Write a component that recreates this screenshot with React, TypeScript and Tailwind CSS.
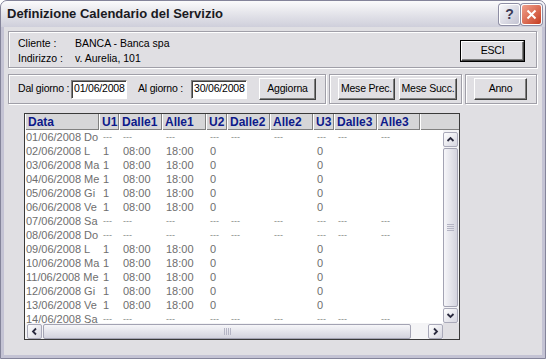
import React from 'react';

const cols = [74, 20, 43, 44, 21, 43, 43, 21, 43, 43];
const heads = ['Data', 'U1', 'Dalle1', 'Alle1', 'U2', 'Dalle2', 'Alle2', 'U3', 'Dalle3', 'Alle3'];

const days: [string, boolean][] = [
  ['01/06/2008 Do', false],
  ['02/06/2008 L', true],
  ['03/06/2008 Ma', true],
  ['04/06/2008 Me', true],
  ['05/06/2008 Gi', true],
  ['06/06/2008 Ve', true],
  ['07/06/2008 Sa', false],
  ['08/06/2008 Do', false],
  ['09/06/2008 L', true],
  ['10/06/2008 Ma', true],
  ['11/06/2008 Me', true],
  ['12/06/2008 Gi', true],
  ['13/06/2008 Ve', true],
  ['14/06/2008 Sa', false],
];

const btn =
  'flex items-center justify-center whitespace-nowrap bg-[#e0dfe3] border border-t-white border-l-white border-r-[#404040] border-b-[#404040] shadow-[inset_-1px_-1px_0_#808080] text-[10.5px] tracking-[-0.2px] text-black';

const group = 'border border-[#a09fa8] shadow-[1px_1px_0_#ffffff,inset_1px_1px_0_#ffffff]';

const input =
  'h-[19px] flex items-center whitespace-nowrap overflow-hidden bg-white pl-[2px] text-[10.5px] text-black border border-t-[#808080] border-l-[#808080] border-r-white border-b-white shadow-[inset_1px_1px_0_#404040]';

function Chevron({ dir }: { dir: 'up' | 'down' | 'left' | 'right' }) {
  const d = {
    up: 'M1.5 6 L4.5 3 L7.5 6',
    down: 'M1.5 3 L4.5 6 L7.5 3',
    left: 'M6 1.5 L3 4.5 L6 7.5',
    right: 'M3 1.5 L6 4.5 L3 7.5',
  }[dir];
  return (
    <svg width="9" height="9" viewBox="0 0 9 9">
      <path d={d} fill="none" stroke="#2b2b3f" strokeWidth={1.8} />
    </svg>
  );
}

function ScrollBtn({ dir }: { dir: 'up' | 'down' | 'left' | 'right' }) {
  return (
    <div className="w-[15px] h-[15px] shrink-0 flex items-center justify-center rounded-[2px] border border-[#a9a9b9] bg-gradient-to-br from-white to-[#d6d6e0]">
      <Chevron dir={dir} />
    </div>
  );
}

export default function App() {
  return (
    <div className="w-[546px] h-[359px] flex flex-col overflow-hidden rounded-t-[7px] border border-[#84849a] bg-[#c4c3d4] font-['Liberation_Sans',Arial,sans-serif]">
      {/* Title bar */}
      <div className="h-[26px] shrink-0 flex items-center pl-[6px] pr-[3px] bg-gradient-to-b from-[#fbfbfc] via-[#e4e4ea] to-[#cfcfdb]">
        <span className="text-[13px] font-bold text-[#1a1a22]">Definizione Calendario del Servizio</span>
        <div className="ml-auto flex gap-[1px]">
          <div className="w-[21px] h-[21px] rounded-[3px] border border-white shadow-[0_0_0_1px_#8e8ea4] bg-gradient-to-br from-[#f7f7fa] to-[#c3c3d2] flex items-center justify-center text-[14px] font-bold text-[#3a3a55]">
            ?
          </div>
          <div className="w-[21px] h-[21px] rounded-[3px] border border-white shadow-[0_0_0_1px_#8e8ea4] bg-gradient-to-br from-[#f0a08c] to-[#c5391b] flex items-center justify-center">
            <svg width="11" height="11" viewBox="0 0 11 11">
              <path d="M1.5 1.5 L9.5 9.5 M9.5 1.5 L1.5 9.5" stroke="white" strokeWidth={2} />
            </svg>
          </div>
        </div>
      </div>

      {/* Frame + body */}
      <div className="flex-1 flex flex-col px-[3px] pb-[3px]">
        <div className="flex-1 flex flex-col bg-[#e0dfe3] pl-[4px] pr-[5px] pt-[4px]">
          {/* Cliente group */}
          <div className={`${group} h-[37px] flex pl-[9px] pr-[11px]`}>
            <div className="flex flex-col pt-[4px] leading-[15px] text-[10.5px] text-black whitespace-nowrap">
              <div className="flex">
                <span className="w-[57px]">Cliente :</span>
                <span>BANCA - Banca spa</span>
              </div>
              <div className="flex">
                <span className="w-[57px]">Indirizzo :</span>
                <span>v. Aurelia, 101</span>
              </div>
            </div>
            <div className="ml-auto mt-[8px] h-[22px] border border-black">
              <div className={`${btn} w-[63px] h-[20px]`}>ESCI</div>
            </div>
          </div>

          {/* Date range groups */}
          <div className="mt-[6px] h-[30px] flex gap-[3px]">
            <div className={`${group} w-[318px] flex items-center pl-[9px] text-[10.5px] tracking-[-0.2px] text-black whitespace-nowrap`}>
              <span className="w-[53px]">Dal giorno :</span>
              <div className={`${input} w-[56px]`}>01/06/2008</div>
              <span className="w-[53px] ml-[11px]">Al giorno :</span>
              <div className={`${input} w-[56px]`}>30/06/2008</div>
              <div className={`${btn} w-[57px] h-[22px] ml-[12px]`}>Aggiorna</div>
            </div>
            <div className={`${group} w-[133px] flex items-center pl-[8px] gap-[4px]`}>
              <div className={`${btn} w-[57px] h-[22px]`}>Mese Prec.</div>
              <div className={`${btn} w-[58px] h-[22px]`}>Mese Succ.</div>
            </div>
            <div className={`${group} w-[72px] flex items-center pl-[8px]`}>
              <div className={`${btn} w-[53px] h-[22px]`}>Anno</div>
            </div>
          </div>

          {/* Grid */}
          <div className="mt-[9px] ml-[16px] w-[436px] h-[227px] flex flex-col border border-[#3a3a3a] bg-white">
            <div className="h-[16px] shrink-0 flex bg-[#d6d6d8]">
              {heads.map((h, i) => (
                <div
                  key={h}
                  style={{ width: cols[i] }}
                  className="h-full flex items-center pl-[2px] border-l border-l-white border-r border-r-[#808080] shadow-[inset_0_-1px_0_#808080] text-[12px] font-bold text-[#0d1a8a] leading-none"
                >
                  {h}
                </div>
              ))}
              <div className="flex-1 h-full border-l border-l-white shadow-[inset_0_-1px_0_#808080]" />
            </div>

            <div className="h-[193px] flex overflow-hidden">
              <div className="flex-1 overflow-hidden">
                {days.map(([d, on]) => {
                  const vals = on
                    ? [d, '1', '08:00', '18:00', '0', '', '', '0', '', '']
                    : [d, '---', '---', '---', '---', '---', '---', '---', '---', '---'];
                  return (
                    <div key={d} className="h-[14px] flex text-[11px] leading-[14px] text-[#6e6e6e] whitespace-nowrap">
                      {vals.map((v, i) => (
                        <div
                          key={i}
                          style={{ width: cols[i] }}
                          className={i === 0 ? 'pl-[1px]' : v === '---' ? 'pl-[4px] text-[9px] text-[#8a8a8a]' : 'pl-[4px]'}
                        >
                          {v}
                        </div>
                      ))}
                    </div>
                  );
                })}
              </div>
              <div className="w-[16px] flex flex-col pt-[2px] bg-[#f4f4f6]">
                <ScrollBtn dir="up" />
                <div className="flex-1 my-[1px] w-[15px] rounded-[2px] border border-[#a3a3b3] bg-gradient-to-r from-[#f6f6f9] to-[#d3d3de] flex flex-col items-center justify-center gap-[1px]">
                  <div className="w-[7px] h-[1px] bg-[#b4b4c4]" />
                  <div className="w-[7px] h-[1px] bg-[#b4b4c4]" />
                  <div className="w-[7px] h-[1px] bg-[#b4b4c4]" />
                  <div className="w-[7px] h-[1px] bg-[#b4b4c4]" />
                </div>
                <ScrollBtn dir="down" />
              </div>
            </div>

            <div className="h-[16px] shrink-0 flex items-center bg-[#f4f4f6]">
              <div className="pl-[2px]">
                <ScrollBtn dir="left" />
              </div>
              <div className="flex-1 h-[15px] ml-[1px] mr-[17px] rounded-[2px] border border-[#a3a3b3] bg-gradient-to-b from-[#f6f6f9] to-[#d3d3de] flex items-center justify-center gap-[1px]">
                <div className="w-[1px] h-[7px] bg-[#b4b4c4]" />
                <div className="w-[1px] h-[7px] bg-[#b4b4c4]" />
                <div className="w-[1px] h-[7px] bg-[#b4b4c4]" />
                <div className="w-[1px] h-[7px] bg-[#b4b4c4]" />
              </div>
              <ScrollBtn dir="right" />
              <div className="w-[16px] h-full bg-[#e0dfe3]" />
            </div>
          </div>
        </div>
      </div>
    </div>
  );
}
